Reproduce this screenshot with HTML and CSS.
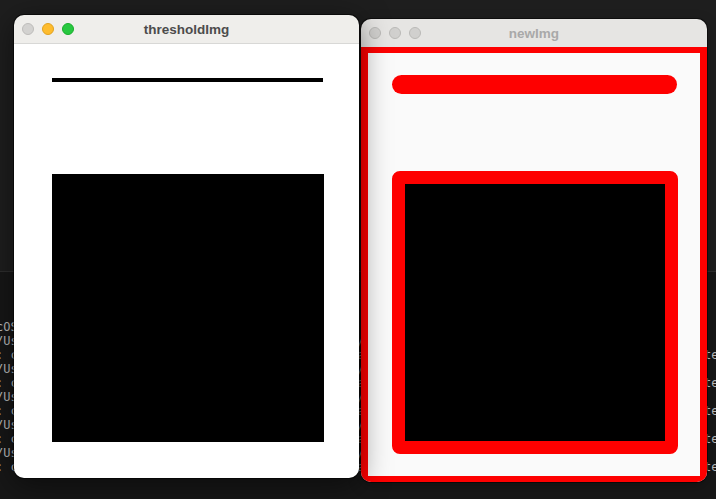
FILE: index.html
```html
<!DOCTYPE html>
<html>
<head>
<meta charset="utf-8">
<link rel="stylesheet" href="styles.css">
</head>
<body>
<div class="desktop">
  <div class="pane-top"></div>
  <div class="pane-term">
<pre class="term">cOS Sonoma 14.4 - opencv threshold demo
/Users/dev/Projects/opencv-demo/.venv/bin/python3 /Users/dev/Projects/opencv-demo/main.py
: cv2 warning: QObject::moveToThread: Current thread (0x600003a4c40) is not the objects thread state (0x600003a4c50)
/Users/dev/Projects/opencv-demo/.venv/bin/python3 /Users/dev/Projects/opencv-demo/main.py
: cv2 warning: QObject::moveToThread: Current thread (0x600003a4c40) is not the objects thread state (0x600003a4c50)
/Users/dev/Projects/opencv-demo/.venv/bin/python3 /Users/dev/Projects/opencv-demo/main.py
: cv2 warning: QObject::moveToThread: Current thread (0x600003a4c40) is not the objects thread state (0x600003a4c50)
/Users/dev/Projects/opencv-demo/.venv/bin/python3 /Users/dev/Projects/opencv-demo/main.py
: cv2 warning: QObject::moveToThread: Current thread (0x600003a4c40) is not the objects thread state (0x600003a4c50)
/Users/dev/Projects/opencv-demo/.venv/bin/python3 /Users/dev/Projects/opencv-demo/main.py
: cv2 warning: QObject::moveToThread: Current thread (0x600003a4c40) is not the objects thread state (0x600003a4c50)</pre>
  </div>

  <div class="window win-left">
    <div class="titlebar">
      <div class="lights">
        <span class="light light-close-off"></span>
        <span class="light light-min"></span>
        <span class="light light-max"></span>
      </div>
      <div class="title">thresholdImg</div>
      <div></div>
    </div>
    <div class="content-left">
      <div class="bar-black"></div>
      <div class="square-black"></div>
    </div>
  </div>

  <div class="window win-right">
    <div class="titlebar titlebar-inactive">
      <div class="lights">
        <span class="light light-off"></span>
        <span class="light light-off"></span>
        <span class="light light-off"></span>
      </div>
      <div class="title title-inactive">newImg</div>
      <div></div>
    </div>
    <div class="content-right">
      <div class="pill-red"></div>
      <div class="rect-red"></div>
    </div>
  </div>
</div>
</body>
</html>
```
FILE: styles.css
```css
html, body {
  margin: 0;
  padding: 0;
  width: 716px;
  height: 499px;
  overflow: hidden;
  background: #161616;
}

.desktop {
  position: relative;
  width: 716px;
  height: 499px;
  display: flex;
  flex-direction: column;
  overflow: hidden;
}

.pane-top {
  flex: none;
  height: 271px;
  background: #1e1e1e;
  border-bottom: 1px solid #2e2e2e;
}

.pane-term {
  flex: 1;
  background: #171717;
  overflow: hidden;
}

.term {
  margin: 48px 0 0 -4px;
  font-family: "DejaVu Sans Mono", monospace;
  font-size: 12px;
  line-height: 14px;
  color: #bcbcbc;
  white-space: pre;
}

.window {
  position: absolute;
  height: 463px;
  border-radius: 10px;
  overflow: hidden;
  display: flex;
  flex-direction: column;
}

.win-left {
  left: 14px;
  top: 15px;
  width: 345px;
  z-index: 2;
  box-shadow: 0 0 0 1px rgba(0, 0, 0, 0.55), 0 6px 30px rgba(0, 0, 0, 0.5);
}

.win-right {
  left: 361px;
  top: 19px;
  width: 346px;
  z-index: 1;
  box-shadow: 0 0 0 1px rgba(0, 0, 0, 0.5), 0 4px 14px rgba(0, 0, 0, 0.25);
}

.titlebar {
  flex: none;
  height: 28px;
  display: grid;
  grid-template-columns: 1fr auto 1fr;
  align-items: center;
  background: #efeeeb;
}

.titlebar-inactive {
  background: #e6e5e3;
}

.lights {
  display: flex;
  gap: 8px;
  padding-left: 8px;
}

.light {
  width: 12px;
  height: 12px;
  border-radius: 50%;
  box-sizing: border-box;
}

.light-close-off {
  background: #d3d2d0;
  border: 1px solid #bdbcba;
}

.light-min {
  background: #febc2e;
  border: 1px solid #e0a220;
}

.light-max {
  background: #28c840;
  border: 1px solid #1aac2c;
}

.light-off {
  background: #d1d0ce;
  border: 1px solid #bab9b7;
}

.title {
  font-family: "Liberation Sans", Arial, sans-serif;
  font-weight: 700;
  font-size: 13.5px;
  color: #4c4c4c;
  white-space: nowrap;
}

.title-inactive {
  color: #a9a9a9;
}

.content-left {
  flex: 1;
  background: #ffffff;
  border-top: 1px solid #d8d8d6;
  padding: 34px 0 0 38px;
}

.bar-black {
  width: 271px;
  height: 4px;
  background: #000;
}

.square-black {
  margin-top: 92px;
  width: 272px;
  height: 268px;
  background: #000;
}

.content-right {
  flex: 1;
  background: #fafafa;
  border-style: solid;
  border-color: #fe0000;
  border-width: 6px 7px;
  padding: 22px 0 0 24px;
}

.pill-red {
  width: 285px;
  height: 19px;
  border-radius: 10px;
  background: #fe0000;
}

.rect-red {
  margin-top: 77px;
  width: 286px;
  height: 283px;
  box-sizing: border-box;
  border: 13px solid #fe0000;
  border-radius: 8px;
  background: #000;
}
```
